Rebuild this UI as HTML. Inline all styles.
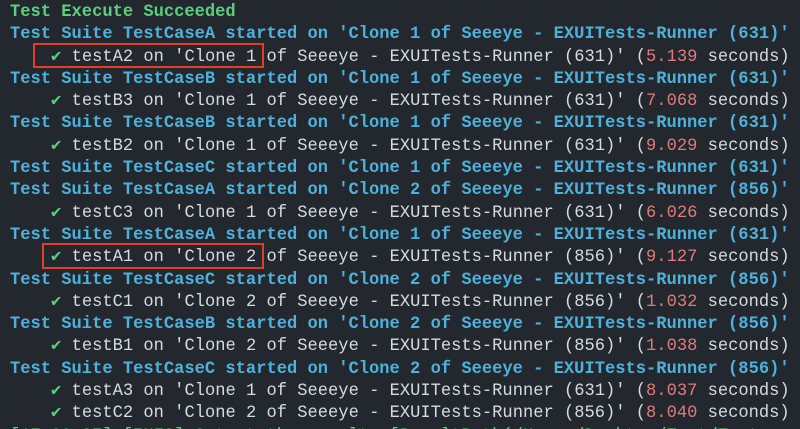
<!DOCTYPE html>
<html><head><style>
html,body{margin:0;padding:0;background:#23282e;width:800px;height:429px;overflow:hidden}
pre{margin:0;padding:0 0 0 10px;font-family:"Liberation Mono","DejaVu Sans Mono",monospace;font-size:17.1px;line-height:22.3px;color:#d6dbe0;position:relative;top:2px}
.g{color:#5ccf7e;font-weight:bold}
.b{color:#4fb1da;font-weight:bold}
.c{color:#5ccf7e}
.r{color:#e07b7b}
.box{position:absolute;border:2.5px solid #e0402b;box-sizing:border-box}
</style></head><body>
<pre><span class="g">Test Execute Succeeded</span>
<span class="b">Test Suite TestCaseA started on 'Clone 1 of Seeeye - EXUITests-Runner (631)'</span>
    <span class="c">✔</span> testA2 on 'Clone 1 of Seeeye - EXUITests-Runner (631)' (<span class="r">5.139</span> seconds)
<span class="b">Test Suite TestCaseB started on 'Clone 1 of Seeeye - EXUITests-Runner (631)'</span>
    <span class="c">✔</span> testB3 on 'Clone 1 of Seeeye - EXUITests-Runner (631)' (<span class="r">7.068</span> seconds)
<span class="b">Test Suite TestCaseB started on 'Clone 1 of Seeeye - EXUITests-Runner (631)'</span>
    <span class="c">✔</span> testB2 on 'Clone 1 of Seeeye - EXUITests-Runner (631)' (<span class="r">9.029</span> seconds)
<span class="b">Test Suite TestCaseC started on 'Clone 1 of Seeeye - EXUITests-Runner (631)'</span>
<span class="b">Test Suite TestCaseA started on 'Clone 2 of Seeeye - EXUITests-Runner (856)'</span>
    <span class="c">✔</span> testC3 on 'Clone 1 of Seeeye - EXUITests-Runner (631)' (<span class="r">6.026</span> seconds)
<span class="b">Test Suite TestCaseA started on 'Clone 1 of Seeeye - EXUITests-Runner (631)'</span>
    <span class="c">✔</span> testA1 on 'Clone 2 of Seeeye - EXUITests-Runner (856)' (<span class="r">9.127</span> seconds)
<span class="b">Test Suite TestCaseC started on 'Clone 2 of Seeeye - EXUITests-Runner (856)'</span>
    <span class="c">✔</span> testC1 on 'Clone 2 of Seeeye - EXUITests-Runner (856)' (<span class="r">1.032</span> seconds)
<span class="b">Test Suite TestCaseB started on 'Clone 2 of Seeeye - EXUITests-Runner (856)'</span>
    <span class="c">✔</span> testB1 on 'Clone 2 of Seeeye - EXUITests-Runner (856)' (<span class="r">1.038</span> seconds)
<span class="b">Test Suite TestCaseC started on 'Clone 2 of Seeeye - EXUITests-Runner (856)'</span>
    <span class="c">✔</span> testA3 on 'Clone 1 of Seeeye - EXUITests-Runner (631)' (<span class="r">8.037</span> seconds)
    <span class="c">✔</span> testC2 on 'Clone 2 of Seeeye - EXUITests-Runner (856)' (<span class="r">8.040</span> seconds)
<span class="c">[17:09:07] [INFO] Output the result: [ResultPath(/Users/Desktop/Test/Test</span></pre>
<div class="box" style="left:33px;top:43px;width:231px;height:25px"></div>
<div class="box" style="left:42px;top:243px;width:222px;height:26px"></div>
</body></html>
